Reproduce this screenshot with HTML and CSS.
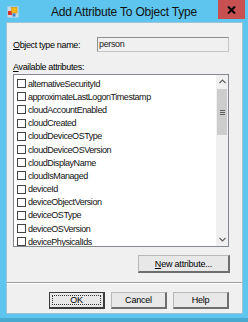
FILE: index.html
```html
<!DOCTYPE html>
<html lang="en">
<head>
    <meta charset="UTF-8">
    <title>Add Attribute To Object Type</title>
    <link rel="stylesheet" href="styles.css">
</head>
<body>
    <div class="window">
        <div class="titlebar">
            <svg class="app-icon" width="12" height="12" viewBox="0 0 12 12">
                <rect x="0.5" y="0.5" width="11" height="11" fill="#c9d9e4"/>
                <rect x="1" y="5" width="4" height="4" fill="#d8302a"/>
                <rect x="4.5" y="1.5" width="5.5" height="5.5" fill="#f4b618" stroke="#d08a00" stroke-width="0.6"/>
                <rect x="5.5" y="7.5" width="3" height="3" fill="#3b7fd4"/>
            </svg>
            <span class="title">Add Attribute To Object Type</span>
            <div class="close">
                <svg width="9" height="8" viewBox="0 0 9 8">
                    <path d="M1 0.5 L8 7.5 M8 0.5 L1 7.5" stroke="#000" stroke-width="2"/>
                </svg>
            </div>
        </div>
        <div class="client">
            <div class="name-row">
                <span class="label"><u>O</u>bject type name:</span>
                <div class="field">person</div>
            </div>
            <div class="avail-label"><u>A</u>vailable attributes:</div>
            <div class="listbox">
                <ul class="items" id="items"></ul>
                <div class="scrollbar">
                    <div class="arrow">
                        <svg width="7" height="5" viewBox="0 0 7 5"><path d="M0.5 4 L3.5 1 L6.5 4" fill="none" stroke="#606060" stroke-width="1.2"/></svg>
                    </div>
                    <div class="thumb">
                        <span class="grip"></span>
                    </div>
                    <div class="track"></div>
                    <div class="arrow">
                        <svg width="7" height="5" viewBox="0 0 7 5"><path d="M0.5 1 L3.5 4 L6.5 1" fill="none" stroke="#606060" stroke-width="1.2"/></svg>
                    </div>
                </div>
            </div>
            <div class="new-row">
                <button class="btn btn-new"><u>N</u>ew attribute...</button>
            </div>
            <div class="separator"></div>
            <div class="footer">
                <button class="btn btn-default"><span class="focus">OK</span></button>
                <button class="btn">Cancel</button>
                <button class="btn">Help</button>
            </div>
        </div>
    </div>

    <script>
        const attributes = [
            "alternativeSecurityId",
            "approximateLastLogonTimestamp",
            "cloudAccountEnabled",
            "cloudCreated",
            "cloudDeviceOSType",
            "cloudDeviceOSVersion",
            "cloudDisplayName",
            "cloudIsManaged",
            "deviceId",
            "deviceObjectVersion",
            "deviceOSType",
            "deviceOSVersion",
            "devicePhysicalIds"
        ];

        // Fill the attribute list
        document.getElementById("items").innerHTML = attributes
            .map(name => `<li><span class="check"></span>${name}</li>`)
            .join("");
    </script>
</body>
</html>
```

FILE: styles.css
```css
body {
    margin: 0;
    font-family: "Liberation Sans", Arial, sans-serif;
    font-size: 9px;
    letter-spacing: -0.35px;
    color: #000;
}
.window {
    width: 248px;
    height: 322px;
    background-color: #5ec6ee;
    display: flex;
    flex-direction: column;
    box-sizing: border-box;
    border-bottom: 4px solid #4aa9cf;
}
.titlebar {
    height: 22px;
    flex-shrink: 0;
    position: relative;
    display: flex;
    align-items: center;
    justify-content: center;
}
.app-icon {
    position: absolute;
    left: 7px;
    top: 6px;
}
.title {
    font-size: 12px;
    letter-spacing: -0.2px;
    color: #111;
    padding-top: 1px;
}
.close {
    position: absolute;
    top: 0;
    right: 3px;
    width: 27px;
    height: 19px;
    background-color: #c75050;
    display: flex;
    align-items: center;
    justify-content: center;
}
.client {
    flex: 1;
    margin: 0 5px 4px 6px;
    background-color: #f0f0f0;
    border: 1px solid #9fc3d6;
    box-sizing: border-box;
    display: flex;
    flex-direction: column;
}
.name-row {
    display: flex;
    align-items: center;
    height: 15px;
    margin: 14px 13px 0 6px;
}
.label {
    width: 84px;
}
.field {
    flex: 1;
    height: 15px;
    box-sizing: border-box;
    border: 1px solid #c4c4c4;
    border-top-color: #8e8e8e;
    border-left-color: #8e8e8e;
    background-color: #f0f0f0;
    padding-left: 1px;
    line-height: 13px;
    color: #222;
}
.avail-label {
    height: 14px;
    line-height: 14px;
    margin: 8px 0 0 6px;
}
.listbox {
    height: 173px;
    margin: 0 13px 0 6px;
    border: 1px solid #828790;
    background-color: #fff;
    box-sizing: border-box;
    display: flex;
    overflow: hidden;
}
.items {
    flex: 1;
    list-style: none;
    margin: 0;
    padding: 2px 0 0 3px;
    overflow: hidden;
}
.items li {
    height: 13.2px;
    display: flex;
    align-items: center;
    white-space: nowrap;
    letter-spacing: -0.45px;
    color: #111;
}
.check {
    width: 9px;
    height: 9px;
    box-sizing: border-box;
    border: 1px solid #444;
    background-color: #fff;
    margin-right: 2px;
    flex-shrink: 0;
}
.scrollbar {
    width: 12px;
    background-color: #f0f0f0;
    display: flex;
    flex-direction: column;
    flex-shrink: 0;
}
.arrow {
    height: 13px;
    display: flex;
    align-items: center;
    justify-content: center;
    background-color: #f0f0f0;
}
.thumb {
    height: 46px;
    margin: 1px 1px 0;
    background-color: #cdcdcd;
    display: flex;
    align-items: center;
    justify-content: center;
}
.grip {
    width: 5px;
    height: 5px;
    background: repeating-linear-gradient(#606060 0 1px, transparent 1px 2px);
}
.track {
    flex: 1;
}
.new-row {
    display: flex;
    justify-content: flex-end;
    margin: 8px 12px 0 0;
}
.btn {
    font-family: "Liberation Sans", Arial, sans-serif;
    font-size: 9px;
    letter-spacing: -0.2px;
    color: #000;
    background-color: #e8e8e8;
    border: 1px solid #b8b8b8;
    border-right: 2px solid #6e6e6e;
    border-bottom: 2px solid #6e6e6e;
    padding: 0;
    width: 56px;
    height: 17px;
    box-sizing: border-box;
}
.btn-new {
    width: 92px;
    height: 18px;
}
.separator {
    height: 1px;
    margin-top: 9px;
    background-color: #a0a0a0;
    border-bottom: 1px solid #fff;
}
.footer {
    display: flex;
    justify-content: flex-end;
    gap: 6px;
    margin: 8px 13px 0 0;
}
.btn-default {
    border-color: #3c3c3c;
    border-right-color: #3c3c3c;
    border-bottom-color: #3c3c3c;
    padding: 2px;
}
.focus {
    display: flex;
    align-items: center;
    justify-content: center;
    height: 100%;
    box-sizing: border-box;
    border: 1px dotted #333;
}
```
